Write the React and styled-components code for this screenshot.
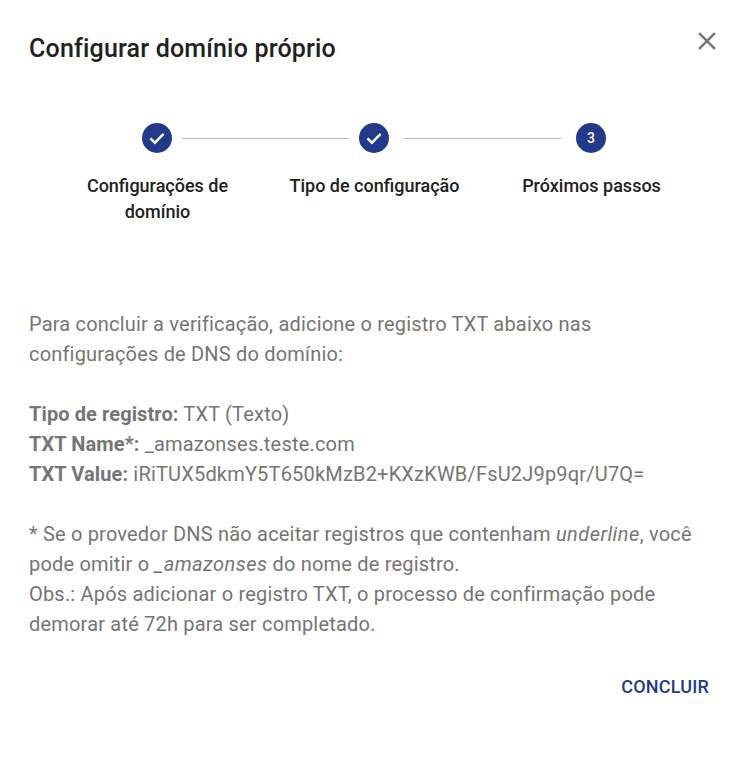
import React from 'react';
import styled, { createGlobalStyle } from 'styled-components';

const GlobalStyle = createGlobalStyle`
  html, body {
    margin: 0;
    background: #fff;
  }
  body {
    font-family: Roboto, "Liberation Sans", sans-serif;
  }
`;

const Dialog = styled.div`
  width: 746px;
  height: 757px;
  box-sizing: border-box;
  padding: 30px 37px 0 29px;
  overflow: hidden;
`;

const Header = styled.header`
  display: flex;
  justify-content: space-between;
  align-items: flex-start;
`;

const Title = styled.h2`
  margin: 1px 0 0;
  font-size: 25px;
  line-height: 36px;
  font-weight: 500;
  letter-spacing: 0.0075em;
  color: #212121;
`;

const CloseButton = styled.button`
  display: flex;
  border: 0;
  padding: 0;
  margin: -4px -13px 0 0;
  background: none;
  color: #757575;
  cursor: pointer;
`;

const Stepper = styled.div`
  margin-top: 56px;
`;

const Track = styled.div`
  display: flex;
  align-items: center;
  padding-left: 113px;
`;

const Circle = styled.div`
  flex: none;
  width: 30px;
  height: 30px;
  border-radius: 50%;
  background: #233a8b;
  color: #fff;
  display: flex;
  align-items: center;
  justify-content: center;
  font-size: 14px;
  font-weight: 500;
`;

const Connector = styled.div`
  flex: none;
  width: ${props => props.$length}px;
  height: 1px;
  background: #bdbdbd;
  margin: 0 ${props => (187 - props.$length) / 2}px;
`;

const Labels = styled.div`
  display: grid;
  grid-template-columns: repeat(3, 217px);
  margin: 20px 0 0 20px;
`;

const Label = styled.div`
  padding: 0 20px;
  font-size: 18px;
  line-height: 26px;
  font-weight: 500;
  text-align: center;
  color: #212121;
`;

const Body = styled.div`
  margin-top: 84px;
  width: 680px;
  font-size: 20px;
  line-height: 30px;
  letter-spacing: 0.00938em;
  color: #757575;

  b {
    letter-spacing: 0.1px;
  }

  i {
    letter-spacing: 0.45px;
  }
`;

const Paragraph = styled.p`
  margin: 0 0 30px;
`;

const Actions = styled.div`
  display: flex;
  justify-content: flex-end;
  margin-top: 34px;
`;

const ActionButton = styled.button`
  border: 0;
  padding: 0;
  background: none;
  font-family: inherit;
  font-size: 18px;
  line-height: 28px;
  font-weight: 500;
  letter-spacing: 0.01em;
  color: #233a8b;
  cursor: pointer;
`;

const Check = () => (
  <svg width="20" height="20" viewBox="0 0 20 20" fill="none" stroke="#fff" strokeWidth="2.4" aria-hidden="true">
    <path d="M3.4 10.4l4.5 4.3 8.7-8.8" />
  </svg>
);

const Close = () => (
  <svg width="30" height="30" viewBox="0 0 24 24" fill="currentColor" aria-hidden="true">
    <path d="M19 6.41 17.59 5 12 10.59 6.41 5 5 6.41 10.59 12 5 17.59 6.41 19 12 13.41 17.59 19 19 17.59 13.41 12z" />
  </svg>
);

export default function App() {
  return (
    <>
      <GlobalStyle />
      <Dialog>
        <Header>
          <Title>Configurar domínio próprio</Title>
          <CloseButton aria-label="Fechar"><Close /></CloseButton>
        </Header>

        <Stepper>
          <Track>
            <Circle><Check /></Circle>
            <Connector $length={167} />
            <Circle><Check /></Circle>
            <Connector $length={157} />
            <Circle>3</Circle>
          </Track>
          <Labels>
            <Label>Configurações de domínio</Label>
            <Label>Tipo de configuração</Label>
            <Label>Próximos passos</Label>
          </Labels>
        </Stepper>

        <Body>
          <Paragraph>
            Para concluir a verificação, adicione o registro TXT abaixo nas configurações de DNS do domínio:
          </Paragraph>
          <Paragraph>
            <b>Tipo de registro:</b> TXT (Texto)<br />
            <b>TXT Name*:</b> _amazonses.teste.com<br />
            <b>TXT Value:</b> iRiTUX5dkmY5T650kMzB2+KXzKWB/FsU2J9p9qr/U7Q=
          </Paragraph>
          <Paragraph>
            * Se o provedor DNS não aceitar registros que contenham <i>underline</i>, você pode omitir o <i>_amazonses</i> do nome de registro.<br />
            Obs.: Após adicionar o registro TXT, o processo de confirmação pode demorar até 72h para ser completado.
          </Paragraph>
        </Body>

        <Actions>
          <ActionButton>CONCLUIR</ActionButton>
        </Actions>
      </Dialog>
    </>
  );
}
